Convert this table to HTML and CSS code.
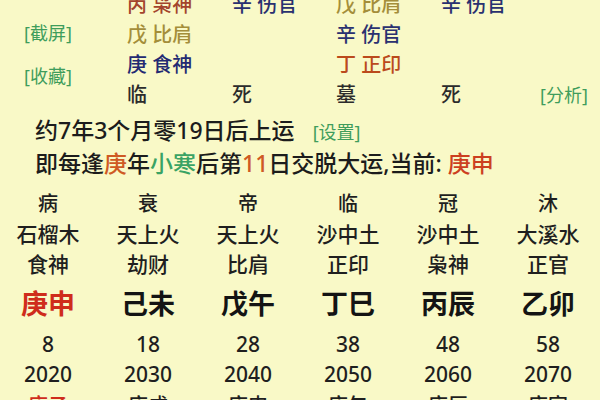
FILE: index.html
```html
<!DOCTYPE html>
<html lang="zh-CN">
<head>
<meta charset="utf-8">
<link rel="stylesheet" href="styles.css">
</head>
<body>
<div class="page">
  <section class="pillars">
    <div class="tools">
      <span class="link">[截屏]</span>
      <span class="link">[收藏]</span>
    </div>
    <div class="cell c-bing">丙 枭神</div>
    <div class="cell c-xin">辛 伤官</div>
    <div class="cell c-wu">戊 比肩</div>
    <div class="cell c-xin">辛 伤官</div>
    <div class="cell side"></div>

    <div class="cell c-wu">戊 比肩</div>
    <div class="cell"></div>
    <div class="cell c-xin">辛 伤官</div>
    <div class="cell"></div>
    <div class="cell side"></div>

    <div class="cell c-geng">庚 食神</div>
    <div class="cell"></div>
    <div class="cell c-ding">丁 正印</div>
    <div class="cell"></div>
    <div class="cell side"></div>

    <div class="cell stage">临</div>
    <div class="cell stage">死</div>
    <div class="cell stage">墓</div>
    <div class="cell stage">死</div>
    <div class="cell side"><span class="link">[分析]</span></div>
  </section>

  <p class="line first">约7年3个月零19日后上运<span class="link set">[设置]</span></p>
  <p class="line">即每逢<span class="o">庚</span>年<span class="g">小寒</span>后第<span class="o">11</span>日交脱大运,当前: <span class="r">庚申</span></p>

  <section class="luck">
    <div class="row r-stage"><span>病</span><span>衰</span><span>帝</span><span>临</span><span>冠</span><span>沐</span></div>
    <div class="row r-nayin"><span class="cut">石榴木</span><span>天上火</span><span>天上火</span><span>沙中土</span><span>沙中土</span><span>大溪水</span></div>
    <div class="row r-god"><span>食神</span><span>劫财</span><span>比肩</span><span>正印</span><span>枭神</span><span>正官</span></div>
    <div class="row r-gz"><span class="red">庚申</span><span>己未</span><span>戊午</span><span>丁巳</span><span>丙辰</span><span>乙卯</span></div>
    <div class="row r-num"><span>8</span><span>18</span><span>28</span><span>38</span><span>48</span><span>58</span></div>
    <div class="row r-num"><span>2020</span><span>2030</span><span>2040</span><span>2050</span><span>2060</span><span>2070</span></div>
    <div class="row r-year"><span class="red">庚子</span><span>庚戌</span><span>庚申</span><span>庚午</span><span>庚辰</span><span>庚寅</span></div>
  </section>
</div>
</body>
</html>
```

FILE: styles.css
```css
* { box-sizing: border-box; }
html, body {
  margin: 0;
  padding: 0;
  width: 600px;
  height: 400px;
  overflow: hidden;
  background: #f9f9c7;
}
body {
  font-family: "Noto Sans", "Noto Sans CJK SC", sans-serif;
  font-weight: 500;
  color: #1f1f1f;
}
.page {
  width: 600px;
  height: 400px;
  overflow: hidden;
}

.pillars {
  display: grid;
  grid-template-columns: 127px 105px 104px 105px 99px 60px;
  grid-template-rows: repeat(4, 30px);
  margin-top: -10px;
}
.tools {
  grid-column: 1;
  grid-row: 1 / span 4;
  display: flex;
  flex-direction: column;
  align-items: flex-start;
  padding: 33px 0 0 24px;
  gap: 22px;
}
.link {
  color: #3f9d5c;
  font-size: 18px;
  font-weight: 400;
  line-height: 21px;
  white-space: nowrap;
}
.cell {
  font-size: 20px;
  line-height: 30px;
  white-space: nowrap;
}
.side { display: flex; align-items: center; }
.c-bing { color: #a3452c; }
.c-xin { color: #2a3170; }
.c-wu { color: #a48e3a; }
.c-geng { color: #232a72; }
.c-ding { color: #bb4a1c; }
.stage { color: #2c2c2c; }

.line {
  margin: 0;
  padding-left: 35px;
  font-size: 23px;
  line-height: 33px;
  white-space: nowrap;
  color: #1c1c1c;
}
.line.first { margin-top: 4px; }
.set { margin-left: 18px; }
.o { color: #cf5a24; }
.g { color: #3aa364; }
.r { color: #cc3f1f; }

.luck {
  margin: 9px 0 0 -2px;
  width: 600px;
}
.row {
  display: grid;
  grid-template-columns: repeat(6, 100px);
  text-align: center;
  white-space: nowrap;
  height: 30px;
  line-height: 30px;
  font-size: 20px;
  color: #1f1f1f;
}
.r-nayin, .r-god { font-size: 21px; }
.r-gz {
  height: 50px;
  line-height: 50px;
  font-size: 27px;
  font-weight: 700;
  color: #141414;
}
.r-num { font-size: 21px; }
.r-year { font-size: 20px; line-height: 34px; height: 34px; }
.red { color: #cf2c1c; }
.cut { clip-path: inset(0 0 0 10px); }
```
